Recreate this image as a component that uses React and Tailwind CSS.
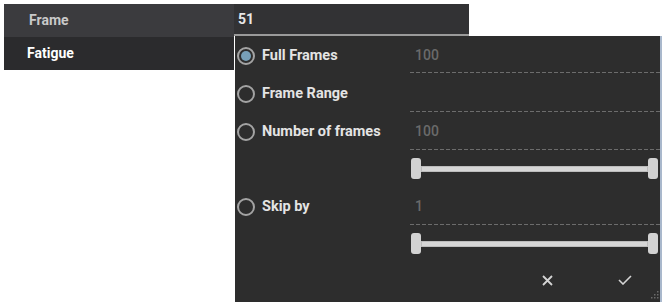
const font = { fontFamily: 'Roboto, "Liberation Sans", sans-serif' }

function Radio({ checked }) {
    return (
        <span className="flex items-center justify-center w-[18px] h-[18px] rounded-full border-2 border-[#a3a3a3] shrink-0">
            {checked && <span className="w-[10px] h-[10px] rounded-full bg-[#78a0b8]" />}
        </span>
    )
}

function Dashed() {
    return <div className="h-px w-full bg-[repeating-linear-gradient(to_right,#6c6c6c_0_4px,transparent_4px_6px)]" />
}

function OptionRow({ label, value, checked, height }) {
    return (
        <div className="flex" style={{ height }}>
            <div className="w-[175px] flex items-center gap-[7px] pl-[2px] pt-[2px]">
                <Radio checked={checked} />
                <span className="text-[14.5px] font-bold text-[#e4e4e4]">{label}</span>
            </div>
            <div className="flex-1 flex flex-col">
                <div className="flex-1 flex items-center pl-[5px] pt-[2px] text-[14px] font-medium text-[#6a6a6a]">{value}</div>
                <Dashed />
            </div>
        </div>
    )
}

function Slider() {
    return (
        <div className="flex h-[37px]">
            <div className="w-[175px]" />
            <div className="flex-1 flex items-center pl-px pr-[2px]">
                <div className="w-[10px] h-[21px] rounded-[3px] bg-[#d2d2d2]" />
                <div className="flex-1 h-[6px] bg-[#d6d6d6] border border-[#bcbcbc]" />
                <div className="w-[10px] h-[21px] rounded-[3px] bg-[#d2d2d2]" />
            </div>
        </div>
    )
}

export default function App() {
    return (
        <div className="w-[664px] h-[302px] bg-white overflow-hidden" style={font}>
            <div className="flex pt-1 pl-1">
                {/* property list */}
                <div className="w-[230px] shrink-0">
                    <div className="h-[33px] bg-[#3b3b3e] flex items-center pl-[25px] text-[14px] font-bold text-[#c9c9c9]">
                        Frame
                    </div>
                    <div className="h-[33px] bg-[#2b2b2d] flex items-center pl-[23px] text-[14px] font-bold text-white">
                        Fatigue
                    </div>
                </div>

                <div className="flex flex-col">
                    {/* input */}
                    <div className="w-[235px] h-[32px] bg-[#323234] border-b-2 border-[#9a9a9a] flex items-center pl-1 text-[14px] font-bold text-[#e8e8e8]">
                        51
                    </div>

                    {/* frame options popup */}
                    <div className="relative w-[427px] h-[266px] ml-px bg-[#2d2d2d] border-r-2 border-[#a9b8cc]">
                        <OptionRow label="Full Frames" value="100" checked height={37} />
                        <OptionRow label="Frame Range" value="" height={39} />
                        <OptionRow label="Number of frames" value="100" height={38} />
                        <Slider />
                        <OptionRow label="Skip by" value="1" height={38} />
                        <Slider />
                        <div className="flex h-[36px] items-center">
                            <div className="w-[307px]" />
                            <svg width="11" height="11" viewBox="0 0 11 11" className="shrink-0">
                                <path d="M1 1L10 10M10 1L1 10" stroke="#d4d4d4" strokeWidth="1.8" />
                            </svg>
                            <div className="w-[65px]" />
                            <svg width="14" height="10" viewBox="0 0 14 10" className="shrink-0">
                                <path d="M1 5L5 9L13 1" stroke="#d4d4d4" strokeWidth="1.6" fill="none" />
                            </svg>
                        </div>
                        <svg width="8" height="8" viewBox="0 0 8 8" className="absolute right-[1px] bottom-[3px]">
                            <rect x="6" y="0" width="1.5" height="1.5" fill="#6a6a6a" />
                            <rect x="3" y="3" width="1.5" height="1.5" fill="#6a6a6a" />
                            <rect x="6" y="3" width="1.5" height="1.5" fill="#6a6a6a" />
                            <rect x="0" y="6" width="1.5" height="1.5" fill="#6a6a6a" />
                            <rect x="3" y="6" width="1.5" height="1.5" fill="#6a6a6a" />
                            <rect x="6" y="6" width="1.5" height="1.5" fill="#6a6a6a" />
                        </svg>
                    </div>
                </div>
            </div>
        </div>
    )
}
